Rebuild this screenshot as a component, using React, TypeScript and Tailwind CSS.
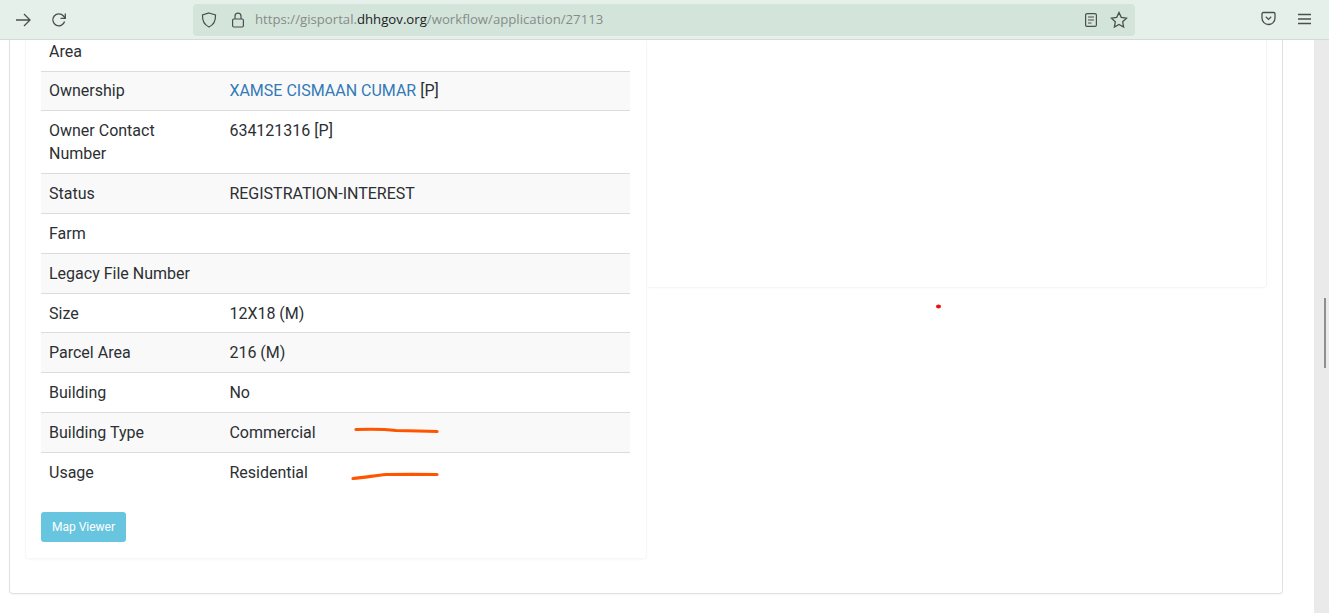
import React from "react";

const rows: { label: React.ReactNode; value?: React.ReactNode; tall?: boolean }[] = [
  { label: "Ownership", value: <><a className="text-[#337ab7]">XAMSE CISMAAN CUMAR</a> [P]</> },
  { label: <>Owner Contact<br />Number</>, value: "634121316 [P]", tall: true },
  { label: "Status", value: "REGISTRATION-INTEREST" },
  { label: "Farm" },
  { label: "Legacy File Number" },
  { label: "Size", value: "12X18 (M)" },
  { label: "Parcel Area", value: "216 (M)" },
  { label: "Building", value: "No" },
  { label: "Building Type", value: "Commercial" },
  { label: "Usage", value: "Residential" },
];

function Toolbar() {
  const ic = "#4a4f4d";
  return (
    <div className="flex h-10 shrink-0 items-center border-b border-[#d2dcd6] bg-[#e6f0ea]">
      <svg width="16" height="16" viewBox="0 0 16 16" fill="none" stroke={ic} strokeWidth="1.3" className="ml-[15px]">
        <path d="M1 8h14M9 2l6 6-6 6" />
      </svg>
      <svg width="16" height="16" viewBox="0 0 16 16" fill="none" stroke={ic} strokeWidth="1.3" className="ml-[20px]">
        <path d="M13.600 9.500A6 6 0 1 1 12.500 4l1.600 2" />
        <path d="M14.300 1.500v4.800H9.500" />
      </svg>
      <div className="ml-[126px] flex h-8 w-[942px] items-center rounded bg-[#d3e4da]">
        <svg width="16" height="16" viewBox="0 0 16 16" fill="none" stroke={ic} strokeWidth="1.2" className="ml-2">
          <path d="M8 1 14.500 3c.3 5.500-1.700 9.700-6.500 12C3.200 12.700 1.200 8.500 1.500 3z" />
        </svg>
        <svg width="14" height="16" viewBox="0 0 14 16" fill="none" stroke={ic} strokeWidth="1.2" className="ml-[14px]">
          <rect x="1.600" y="7" width="10.800" height="8" rx="1.200" />
          <path d="M4 7V4.200a3 3 0 0 1 6 0V7" />
        </svg>
        <span className="ml-[10px] mt-px font-['Open_Sans',sans-serif] text-[13.2px] whitespace-nowrap text-[#868c89]">
          https://gisportal.<span className="text-[#1c211e]">dhhgov.org</span>/workflow/application/27113
        </span>
        <div className="flex-1" />
        <svg width="14" height="16" viewBox="0 0 14 16" fill="none" stroke={ic} strokeWidth="1.200">
          <rect x="1.600" y="1.600" width="10.800" height="12.800" rx="1.500" />
          <path d="M4 5h6M4 8h6M4 11h3.500" />
        </svg>
        <svg width="18" height="18" viewBox="0 0 18 18" fill="none" stroke={ic} strokeWidth="1.300" className="ml-[12px] mr-[7px]">
          <path d="m9 1.500 2.300 4.900 5.200.7-3.800 3.700.9 5.300L9 13.500l-4.600 2.600.9-5.300L1.500 7.100l5.200-.7z" />
        </svg>
      </div>
      <svg width="15" height="15" viewBox="0 0 15 15" fill="none" stroke={ic} strokeWidth="1.300" className="ml-[126px] mb-[2px]">
        <path d="M1 2.800c0-.8.500-1.300 1.300-1.300h10.400c.8 0 1.300.5 1.300 1.300v4.200c0 3.700-2.900 6.500-6.500 6.500S1 10.700 1 7z" />
        <path d="m4.800 5.800 2.700 2.600 2.700-2.600" />
      </svg>
      <svg width="13" height="12" viewBox="0 0 13 12" fill="none" stroke={ic} strokeWidth="1.300" className="ml-[22px] mb-[2px]">
        <path d="M0 1.500h13M0 6h13M0 10.500h13" />
      </svg>
    </div>
  );
}

export default function App() {
  return (
    <div className="flex h-[613px] flex-col overflow-hidden bg-white font-['Roboto',sans-serif] text-[#2c2f33]">
      <Toolbar />
      <div className="flex min-h-0 flex-1">
        <div className="relative flex-1 pl-[9px] pr-[31px]">
          <div className="flex h-[554px] rounded-b border-x border-b border-[#dfe1e3] pl-[15px] pr-[15px] shadow-[0_1px_2px_rgba(0,0,0,0.04)]">
            <section className="flex h-[519px] w-[622px] shrink-0 flex-col rounded-b border-x border-b border-[#f7f7f7] pl-[15px] pr-[16px] shadow-[0_1px_2px_rgba(0,0,0,0.03)]">
              <div className="h-[31.500px] shrink-0 border-b border-[#dcdcdc] pl-2 text-base leading-[23px]">Area</div>
              {rows.map((r, i) => (
                <div
                  key={i}
                  className={`flex shrink-0 pt-[7.900px] pl-2 text-base leading-[23px] ${
                    r.tall ? "h-[63px]" : "h-[39.800px]"
                  } ${i % 2 === 0 ? "bg-[#f9f9f9]" : ""} ${i === rows.length - 1 ? "" : "border-b border-[#dcdcdc]"}`}
                >
                  <div className="w-[180.400px] shrink-0">{r.label}</div>
                  <div>{r.value}</div>
                </div>
              ))}
              <button className="mt-[19.400px] h-[30px] w-[85px] shrink-0 rounded-[3px] bg-[#68c5e0] text-xs text-white">Map Viewer</button>
            </section>
            <section className="h-[248px] flex-1 rounded-b border-r border-b border-[#f5f5f5] shadow-[0_1px_2px_rgba(0,0,0,0.02)]" />
          </div>
          <svg className="absolute left-0 top-0" width="1300" height="560" fill="none">
            <path d="M356 389.500c15-.5 30-.2 40 1 14 .2 28 .5 41 1" stroke="#ff5500" strokeWidth="3.200" strokeLinecap="round" />
            <path d="M353 438.500c12-1 22-3 33-4 17-.3 34-.3 51 0" stroke="#ff5500" strokeWidth="3.200" strokeLinecap="round" />
            <ellipse cx="938.500" cy="266.500" rx="2.500" ry="2" fill="#ee1111" />
          </svg>
        </div>
        <div className="relative w-[15px] shrink-0 bg-[#eaeaea]">
          <div className="absolute left-[10px] top-[258px] h-[70px] w-[2px] bg-[#8f8f8f]" />
        </div>
      </div>
    </div>
  );
}
